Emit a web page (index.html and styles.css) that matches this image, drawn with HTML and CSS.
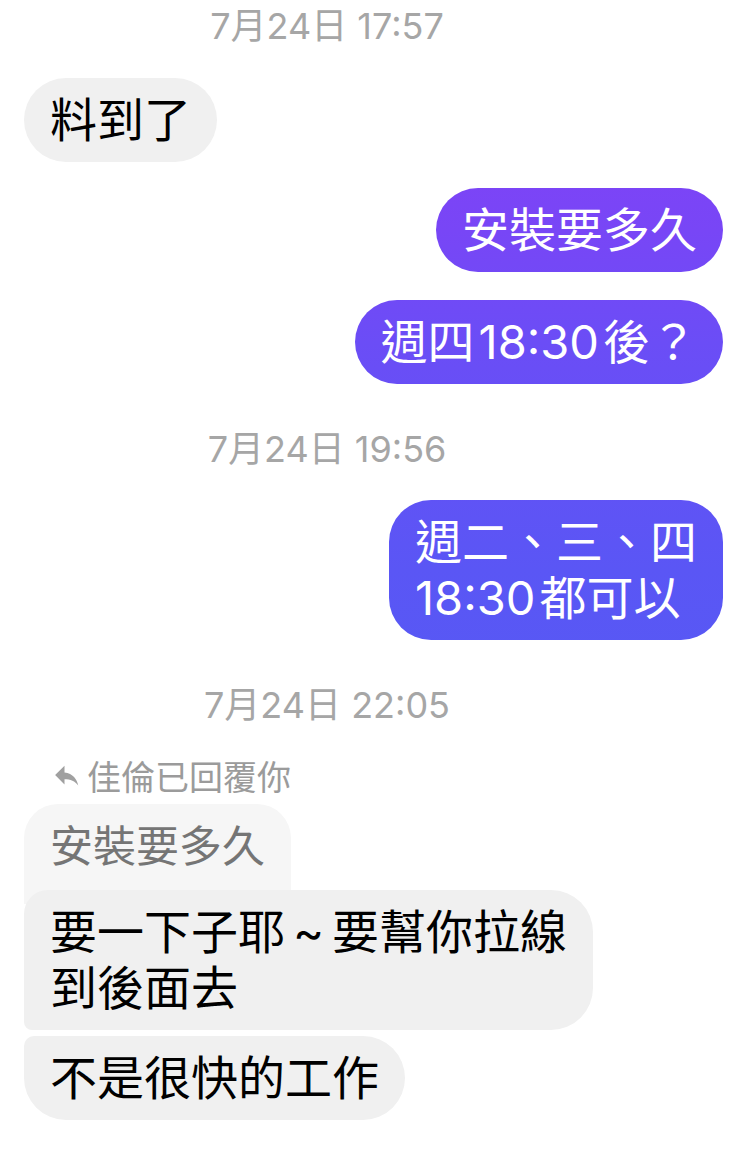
FILE: index.html
```html
<!DOCTYPE html>
<html lang="zh-Hant">
<head>
    <meta charset="UTF-8">
    <meta name="viewport" content="width=device-width, initial-scale=1.0">
    <title>聊天</title>
    <link rel="stylesheet" href="styles.css">
</head>
<body>
    <div class="chat">
        <div class="time time-first">7月24日 17:57</div>
        <div class="bubble in single">料到了</div>

        <div class="bubble out gap-26">安裝要多久</div>
        <div class="bubble out gap-28">週四<span class="num">18:30</span>後？</div>

        <div class="time">7月24日 19:56</div>
        <div class="bubble out">週二、三、四<br><span class="num num-start">18:30</span>都可以</div>

        <div class="time">7月24日 22:05</div>
        <div class="replyLabel">
            <svg class="replyIcon" viewBox="0 0 24 24" width="30" height="30">
                <path d="M10 8.5V4.5L2.5 12l7.5 7.5v-4.2c4.8 0 8.4 1.4 11 5-1-5-4.2-9.6-11-10.4z"></path>
            </svg>
            <span>佳倫已回覆你</span>
        </div>
        <div class="quoted">安裝要多久</div>
        <div class="bubble in first">要一下子耶<span class="tilde">~</span>要幫你拉線<br>到後面去</div>
        <div class="bubble in last">不是很快的工作</div>
    </div>
</body>
</html>
```

FILE: styles.css
```css
body {
    margin: 0;
    background-color: #ffffff;
    font-family: Inter, "Noto Sans CJK TC", sans-serif;
}

.chat {
    display: flex;
    flex-direction: column;
    padding: 0 17px 40px 24px;
}

.time {
    margin-top: 45px;
    padding-right: 93px;
    height: 40px;
    line-height: 40px;
    font-size: 36px;
    color: #a6a6a6;
    text-align: center;
}

.time-first {
    margin-top: 6px;
}

.bubble {
    box-sizing: border-box;
    max-width: 572px;
    padding: 14px 26px;
    border-radius: 42px;
    font-size: 47px;
    line-height: 56px;
    margin-top: 31px;
}

.bubble.in {
    align-self: flex-start;
    background-color: #f0f0f0;
    color: #000000;
}

.bubble.out {
    align-self: flex-end;
    color: #ffffff;
    background: linear-gradient(to bottom, #8a3df8 0px, #7846f6 230px, #6b4df6 342px, #5a56f5 570px, #4a63f0 1158px) fixed;
}

.num {
    margin: 0 4px;
}

.num-start {
    margin-left: 0;
}

.tilde {
    display: inline-block;
    width: 0.8em;
    margin: 0 0.1em;
    text-align: center;
}

.bubble.single {
    margin-top: 32px;
}

.gap-26 {
    margin-top: 26px;
}

.gap-28 {
    margin-top: 28px;
}

.replyLabel {
    display: flex;
    align-items: center;
    gap: 5px;
    margin-top: 30px;
    padding-left: 28px;
    height: 40px;
    font-size: 34px;
    color: #9b9b9b;
}

.replyIcon {
    fill: #a0a0a0;
}

.quoted {
    align-self: flex-start;
    margin-top: 9px;
    padding: 14px 26px 30px;
    border-radius: 34px 34px 0 0;
    background-color: #f6f6f6;
    color: #757575;
    font-size: 43px;
    line-height: 56px;
}

.bubble.first {
    position: relative;
    margin-top: -14px;
    border-radius: 24px 42px 42px 8px;
}

.bubble.last {
    margin-top: 6px;
    border-radius: 10px 42px 42px 42px;
}
```
